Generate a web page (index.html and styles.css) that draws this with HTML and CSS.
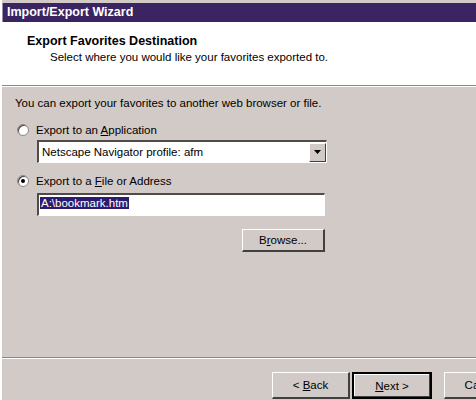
FILE: index.html
```html
<!DOCTYPE html>
<html lang="en">
<head>
    <meta charset="UTF-8">
    <meta name="viewport" content="width=device-width, initial-scale=1.0">
    <title>Import/Export Wizard</title>
    <link rel="stylesheet" href="styles.css">
</head>
<body>

    <div class="window">
        <div class="titlebar">Import/Export Wizard</div>

        <div class="header">
            <h1>Export Favorites Destination</h1>
            <p>Select where you would like your favorites exported to.</p>
        </div>
        <div class="rule"></div>

        <div class="content">
            <p class="intro">You can export your favorites to another web browser or file.</p>

            <label class="option">
                <span class="radio"></span>
                <span>Export to an <u>A</u>pplication</span>
            </label>
            <div class="select">
                <span class="select-text">Netscape Navigator profile: afm</span>
                <span class="select-btn">
                    <svg width="7" height="4" viewBox="0 0 7 4"><path d="M0 0h7L3.5 4z" fill="#000"/></svg>
                </span>
            </div>

            <label class="option">
                <span class="radio checked"></span>
                <span>Export to a <u>F</u>ile or Address</span>
            </label>
            <div class="field"><span class="selected">A:\bookmark.htm</span></div>

            <div class="browse-row">
                <button class="btn browse">B<u>r</u>owse...</button>
            </div>
        </div>

        <div class="rule footer-rule"></div>

        <div class="buttons">
            <button class="btn">&lt; <u>B</u>ack</button>
            <button class="btn default"><u>N</u>ext &gt;</button>
            <button class="btn cancel">Cancel</button>
        </div>
    </div>

</body>
</html>
```

FILE: styles.css
```css
* {
    box-sizing: border-box;
}
body {
    margin: 0;
    background-color: #d2cac6;
    font-family: "Liberation Sans", Arial, sans-serif;
    font-size: 11.5px;
    color: #000;
    overflow: hidden;
}
.window {
    height: 400px;
    border-left: 2px solid #fff;
    padding-top: 3px;
    display: flex;
    flex-direction: column;
}
.titlebar {
    height: 19px;
    background-color: #3b2462;
    color: #fff;
    font-weight: bold;
    font-size: 12.5px;
    line-height: 19px;
    padding-left: 4px;
    border-left: 1px solid #9a8fb0;
}
.header {
    background-color: #fff;
    height: 63px;
    padding: 12px 0 0 25px;
}
.header h1 {
    margin: 0;
    font-size: 12.5px;
    font-weight: bold;
}
.header p {
    margin: 3px 0 0 23px;
}
.rule {
    height: 2px;
    border-top: 1px solid #8e8884;
    border-bottom: 1px solid #fff;
}
.content {
    padding: 9px 0 0 13px;
    width: 400px;
}
.intro {
    margin: 0 0 11px;
    line-height: 15px;
}
.option {
    display: flex;
    align-items: center;
    gap: 7px;
    padding-left: 2px;
    height: 16px;
}
.radio {
    width: 12px;
    height: 12px;
    border-radius: 50%;
    background: #fff;
    border: 1px solid #8e8884;
    box-shadow: inset 1px 1px 0 #404040;
    display: flex;
    align-items: center;
    justify-content: center;
}
.radio.checked::after {
    content: "";
    width: 4px;
    height: 4px;
    border-radius: 50%;
    background: #000;
}
.select {
    margin: 2px 0 10px 22px;
    width: 290px;
    height: 23px;
    background: #fff;
    border-top: 2px solid #504a48;
    border-left: 2px solid #504a48;
    border-bottom: 1px solid #fff;
    border-right: 1px solid #fff;
    display: flex;
    align-items: center;
}
.select-text {
    flex: 1;
    padding-left: 3px;
}
.select-btn {
    width: 17px;
    height: 19px;
    background: #d2cac6;
    border-top: 1px solid #fff;
    border-left: 1px solid #fff;
    border-right: 1px solid #404040;
    border-bottom: 1px solid #404040;
    display: flex;
    align-items: center;
    justify-content: center;
}
.field {
    margin: 4px 0 0 22px;
    width: 288px;
    height: 23px;
    background: #fff;
    border-top: 2px solid #504a48;
    border-left: 2px solid #504a48;
    border-bottom: 1px solid #fff;
    border-right: 1px solid #fff;
    padding: 2px 0 0 1px;
}
.selected {
    background: #2c1b6e;
    color: #fff;
    padding: 0 1px;
}
.browse-row {
    display: flex;
    justify-content: flex-end;
    width: 310px;
    margin-top: 13px;
}
.btn {
    font-family: inherit;
    font-size: 11.5px;
    color: #000;
    background: #d2cac6;
    width: 78px;
    height: 24px;
    border-top: 1px solid #fff;
    border-left: 1px solid #fff;
    border-right: 2px solid #404040;
    border-bottom: 2px solid #404040;
    padding: 0;
    flex-shrink: 0;
}
.browse {
    width: 83px;
    height: 23px;
}
.footer-rule {
    margin-top: auto;
}
.buttons {
    display: flex;
    gap: 2px;
    padding: 13px 0 0 270px;
    height: 41px;
    overflow: hidden;
}
.buttons .btn {
    height: 27px;
}
.default {
    width: 80px;
    border: 2px solid #000;
    box-shadow: inset -1px -1px 0 #404040, inset 1px 1px 0 #fff;
}
.cancel {
    margin-left: 10px;
}
```
